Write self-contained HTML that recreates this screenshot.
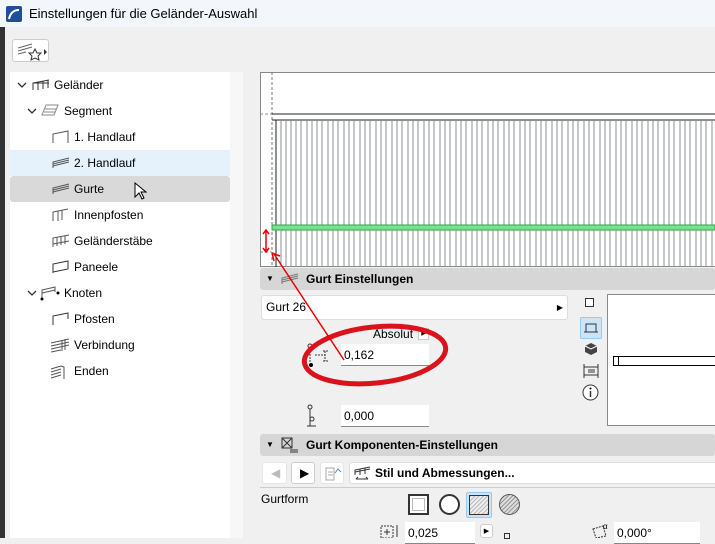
<!DOCTYPE html>
<html><head><meta charset="utf-8"><style>
*{margin:0;padding:0;box-sizing:border-box}
body{width:715px;height:538px;overflow:hidden;background:#f0f0f0;font-family:"Liberation Sans",sans-serif;font-size:12px;color:#000;position:relative}
.a{position:absolute}
.title{left:0;top:0;width:715px;height:27px;background:#f3f6fa}
.tree{left:10px;top:72px;width:220px;height:466px;background:#fff}
.row{position:absolute;left:0;width:220px;height:26px;line-height:26px}
.row span{position:absolute}
.chev{position:absolute;top:9px}
.hdr{position:absolute;left:260px;width:455px;height:22px;background:#d6d6d6;border-radius:3px;font-weight:bold;line-height:22px}
.inp{position:absolute;background:#fff;border-bottom:1px solid #888;height:22px;line-height:22px;padding-left:3px}
.btn{position:absolute;background:#fff;border:1px solid #ccc;border-radius:3px}
</style></head><body>
<div class="a title"></div>
<svg class="a" style="left:6px;top:6px" width="16" height="16"><rect width="16" height="16" rx="2" fill="#1f4e9c"/><path d="M3 13 Q5 4 13 4" stroke="#fff" stroke-width="2" fill="none"/></svg>
<div class="a" style="left:29px;top:6px;font-size:13px">Einstellungen für die Geländer-Auswahl</div>
<div class="a" style="left:0;top:27px;width:5px;height:511px;background:#333"></div>
<div class="btn" style="left:12px;top:39px;width:37px;height:23px"><svg width="37" height="23"><path d="M5 8l14-4M5 11l14-4M5 14l8-2" stroke="#666" fill="none"/><path d="M22 9l2 4 4 0-3 3 1 4-4-2-4 2 1-4-3-3 4 0z" stroke="#333" fill="#fff"/><path d="M31 9l3 3-3 3z" fill="#333"/></svg></div>
<div class="a tree">
<div class="row" style="top:0"><svg class="chev" style="left:7px" width="10" height="8"><path d="M1 2l4 4 4-4" stroke="#333" stroke-width="1.3" fill="none"/></svg><svg class="a" style="left:22px;top:7px" width="18" height="12"><path d="M1 11V4l16-3M1 4h16M6 11V3M11 10V2M16 9V1" stroke="#333" fill="none"/></svg><span style="left:44px">Geländer</span></div>
<div class="row" style="top:26px"><svg class="chev" style="left:17px" width="10" height="8"><path d="M1 2l4 4 4-4" stroke="#333" stroke-width="1.3" fill="none"/></svg><svg class="a" style="left:31px;top:6px" width="18" height="12"><path d="M1 11h12l4-10H5zM3 8h11M4 5h11" stroke="#888" fill="none"/></svg><span style="left:54px">Segment</span></div>
<div class="row" style="top:52px"><svg class="a" style="left:42px;top:6px" width="18" height="14"><path d="M1 13V4l15-3v12" stroke="#555" fill="none"/></svg><span style="left:64px">1. Handlauf</span></div>
<div class="row" style="top:78px;background:#e5f1fb"><svg class="a" style="left:42px;top:7px" width="18" height="12"><path d="M1 11V5l16-4M1 7l16-4M1 9l16-4" stroke="#555" fill="none"/></svg><span style="left:64px">2. Handlauf</span></div>
<div class="row" style="top:104px;background:#d9d9d9;border-radius:3px"><svg class="a" style="left:42px;top:7px" width="18" height="12"><path d="M1 11V5l16-4M1 7l16-4M1 9l16-4" stroke="#555" fill="none"/></svg><span style="left:64px">Gurte</span><svg class="a" style="left:124px;top:6px" width="14" height="18"><path d="M1 1v14l4-4 3 6 2-1-3-6h5z" fill="#fff" stroke="#000"/></svg></div>
<div class="row" style="top:130px"><svg class="a" style="left:42px;top:6px" width="18" height="14"><path d="M1 13V4l15-3M6 13V3M10 12V2" stroke="#555" fill="none"/></svg><span style="left:64px">Innenpfosten</span></div>
<div class="row" style="top:156px"><svg class="a" style="left:42px;top:6px" width="18" height="14"><path d="M1 13V4l16-3M1 10l16-3M5 12V3M9 11V2M13 10V2" stroke="#555" fill="none"/></svg><span style="left:64px">Geländerstäbe</span></div>
<div class="row" style="top:182px"><svg class="a" style="left:42px;top:6px" width="18" height="14"><path d="M1 13V4l15-3v8L1 12" stroke="#333" fill="none"/></svg><span style="left:64px">Paneele</span></div>
<div class="row" style="top:208px"><svg class="chev" style="left:17px" width="10" height="8"><path d="M1 2l4 4 4-4" stroke="#333" stroke-width="1.3" fill="none"/></svg><svg class="a" style="left:30px;top:5px" width="20" height="16"><path d="M2 14V5l13-3v5M2 8l13-3" stroke="#555" fill="none"/><circle cx="2" cy="14" r="1.5"/><circle cx="18" cy="8" r="1.5"/></svg><span style="left:54px">Knoten</span></div>
<div class="row" style="top:234px"><svg class="a" style="left:42px;top:6px" width="18" height="14"><path d="M1 13V4l15-3v6" stroke="#333" fill="none"/></svg><span style="left:64px">Pfosten</span></div>
<div class="row" style="top:260px"><svg class="a" style="left:40px;top:5px" width="20" height="16"><path d="M1 6l18-4M1 9l18-4M1 12l18-4M1 15l10-2M12 14V3M15 13V2" stroke="#555" fill="none"/></svg><span style="left:64px">Verbindung</span></div>
<div class="row" style="top:286px"><svg class="a" style="left:40px;top:5px" width="20" height="16"><path d="M1 6l10-3M1 9l10-3M1 12l10-3M1 15l10-3M11 3l3 1v12" stroke="#555" fill="none"/></svg><span style="left:64px">Enden</span></div>
</div>
<div class="a" style="left:230px;top:72px;width:13px;height:466px;background:#f7f7f7"></div>
<svg class="a" style="left:260px;top:72px" width="455" height="195">
<rect x="0.5" y="0.5" width="460" height="194" fill="#fff" stroke="#888"/>
<line x1="12" y1="0" x2="12" y2="195" stroke="#777" stroke-dasharray="3,2"/>
<line x1="0" y1="42" x2="12" y2="42" stroke="#888" stroke-dasharray="3,2"/>
<line x1="12" y1="42" x2="455" y2="42" stroke="#222"/>
<line x1="12" y1="48" x2="455" y2="48" stroke="#222"/>
<g stroke="#8a9096">
<path d="M21 48V195M26 48V195M31 48V195M36 48V195M41 48V195M47 48V195M52 48V195M57 48V195M62 48V195M68 48V195M73 48V195M78 48V195M84 48V195M89 48V195M94 48V195M100 48V195M105 48V195M110 48V195M116 48V195M121 48V195M126 48V195M132 48V195M137 48V195M142 48V195M148 48V195M153 48V195M158 48V195M164 48V195M169 48V195M174 48V195M180 48V195M185 48V195M190 48V195M196 48V195M201 48V195M206 48V195M212 48V195M217 48V195M222 48V195M228 48V195M233 48V195M238 48V195M244 48V195M249 48V195M254 48V195M260 48V195M265 48V195M270 48V195M276 48V195M281 48V195M286 48V195M292 48V195M297 48V195M302 48V195M308 48V195M313 48V195M318 48V195M324 48V195M329 48V195M334 48V195M340 48V195M345 48V195M350 48V195M356 48V195M361 48V195M366 48V195M372 48V195M377 48V195M382 48V195M388 48V195M393 48V195M398 48V195M404 48V195M409 48V195M414 48V195M420 48V195M425 48V195M430 48V195M436 48V195M441 48V195M446 48V195M452 48V195"/>
</g>
<path d="M16 48V195" stroke="#222"/>
<rect x="12" y="153" width="443" height="5" fill="#7ddf8f" stroke="#2aa84a"/>
<line x1="0" y1="180" x2="12" y2="180" stroke="#888" stroke-dasharray="3,2"/>
<path d="M6 158V180M3 162l3-4 3 4M3 176l3 4 3-4" stroke="#e00" stroke-width="1.5" fill="none"/>
</svg>
<div class="hdr" style="top:268px"><span style="position:absolute;left:6px;font-size:8px">▼</span><svg class="a" style="left:21px;top:5px" width="18" height="12"><path d="M1 11V5l16-4M1 7l16-4M1 9l16-4" stroke="#777" fill="none"/></svg><span style="position:absolute;left:46px">Gurt Einstellungen</span></div>
<div class="btn" style="left:261px;top:295px;width:307px;height:25px;line-height:23px;padding-left:4px;border-color:#ddd">Gurt 26<span style="position:absolute;right:4px;font-size:8px">▶</span></div>
<div class="a" style="left:373px;top:327px">Absolut</div>
<div class="a" style="left:418px;top:328px;width:11px;height:12px;border:1px solid #ccc;background:#fff;font-size:6px;text-align:center;line-height:11px">▶</div>
<svg class="a" style="left:306px;top:343px" width="30" height="26"><circle cx="4" cy="3" r="2" fill="none" stroke="#333"/><path d="M4 5v15M9 12h10M19 8v10M17 8h5M17 18h5" stroke="#333" fill="none" stroke-dasharray="2,1"/><circle cx="5" cy="22" r="2"/></svg>
<div class="inp" style="left:341px;top:344px;width:88px">0,162</div>
<svg class="a" style="left:306px;top:404px" width="20" height="24"><circle cx="4" cy="3" r="2" fill="none" stroke="#333"/><path d="M4 5v17M1 22h9" stroke="#333"/><circle cx="6" cy="15" r="2" fill="none" stroke="#333"/></svg>
<div class="inp" style="left:341px;top:405px;width:88px">0,000</div>
<div class="a" style="left:585px;top:298px;width:9px;height:9px;border:1px solid #333;background:#fff"></div>
<div class="a" style="left:580px;top:317px;width:22px;height:22px;background:#cce4f7;border:1px solid #99c9ef;border-radius:2px"></div>
<svg class="a" style="left:583px;top:320px" width="16" height="16"><path d="M3 12V4h10v8M1 12h14" stroke="#333" fill="none"/></svg>
<svg class="a" style="left:584px;top:342px" width="14" height="14"><path d="M7 1l6 3v6l-6 3-6-3V4z" fill="#444"/><path d="M1 4l6 3 6-3" stroke="#fff" fill="none"/></svg>
<svg class="a" style="left:582px;top:363px" width="18" height="16"><path d="M2 1v14M16 1v14M2 4h14M2 12h14M6 7h7M6 9h7" stroke="#333" fill="none"/></svg>
<svg class="a" style="left:582px;top:384px" width="17" height="17"><circle cx="8.5" cy="8.5" r="7.5" fill="#fff" stroke="#333"/><path d="M8.5 7v6" stroke="#333" stroke-width="1.5"/><circle cx="8.5" cy="4.5" r="1"/></svg>
<div class="a" style="left:607px;top:294px;width:110px;height:132px;background:#fff;border:1px solid #888"></div>
<div class="a" style="left:613px;top:356px;width:105px;height:10px;border:1px solid #000"></div>
<div class="a" style="left:613px;top:356px;width:6px;height:10px;border:1px solid #000"></div>
<svg class="a" style="left:260px;top:240px" width="200" height="160">
<ellipse cx="115" cy="115" rx="71" ry="28" transform="rotate(-6 115 115)" fill="none" stroke="#d9121b" stroke-width="5" stroke-dasharray="420,14"/>
<path d="M84 120L14 14M12 13l2 8M12 13l8 3" stroke="#e00" stroke-width="1.5" fill="none"/>
</svg>
<div class="hdr" style="top:434px"><span style="position:absolute;left:6px;font-size:8px">▼</span><svg class="a" style="left:21px;top:3px" width="18" height="16"><rect x="1" y="1" width="10" height="10" fill="none" stroke="#333"/><path d="M1 1l10 10M11 1L1 11M9 13h8M9 15h8" stroke="#333"/></svg><span style="position:absolute;left:46px">Gurt Komponenten-Einstellungen</span></div>
<div class="btn" style="left:262px;top:462px;width:25px;height:22px;border-color:#e5e5e5"><span style="position:absolute;left:8px;top:3px;color:#bbb">◀</span></div>
<div class="btn" style="left:291px;top:462px;width:24px;height:22px"><span style="position:absolute;left:8px;top:3px">▶</span></div>
<div class="btn" style="left:320px;top:462px;width:24px;height:22px;border-color:#e5e5e5"><svg width="24" height="22"><path d="M5 5h8v12H5zM7 9h5M7 12h5" stroke="#aaa" fill="none"/><path d="M14 10l3-4 3 3" stroke="#4a90d9" fill="none"/></svg></div>
<div class="btn" style="left:349px;top:462px;width:370px;height:22px;border-color:#ddd;font-weight:bold;line-height:20px;padding-left:25px">Stil und Abmessungen...<svg class="a" style="left:4px;top:3px" width="18" height="16"><path d="M1 9V4l15-3M1 6l15-3M6 9V3M11 8V2M2 13h12M2 13l2-2M14 13l-2-2" stroke="#333" fill="none"/></svg></div>
<div class="a" style="left:260px;top:487px;width:455px;height:1px;background:#ccc"></div>
<div class="a" style="left:261px;top:492px">Gurtform</div>
<div class="a" style="left:408px;top:494px;width:21px;height:21px;border:2px solid #333;background:#fff;outline:1px solid #bbb;outline-offset:-5px"></div>
<div class="a" style="left:439px;top:494px;width:21px;height:21px;border:2px solid #333;border-radius:50%;background:#fff"></div>
<div class="a" style="left:466px;top:492px;width:26px;height:26px;background:#cce4f7;border:1px solid #99c9ef;border-radius:2px"></div>
<div class="a" style="left:469px;top:495px;width:20px;height:20px;border:1px solid #333;background:repeating-linear-gradient(135deg,#bbb 0 1px,#eee 1px 3px)"></div>
<div class="a" style="left:499px;top:494px;width:21px;height:21px;border:1px solid #555;border-radius:50%;background:repeating-linear-gradient(135deg,#999 0 1px,#ddd 1px 3px)"></div>
<svg class="a" style="left:379px;top:523px" width="22" height="15"><rect x="2" y="3" width="12" height="12" fill="none" stroke="#333" stroke-dasharray="2,1"/><path d="M8 6v6M5 9h6M18 2v12" stroke="#333"/></svg>
<div class="inp" style="left:405px;top:522px;width:70px">0,025</div>
<div class="btn" style="left:480px;top:524px;width:13px;height:14px;font-size:7px;text-align:center;line-height:13px">▶</div>
<div class="a" style="left:504px;top:533px;width:6px;height:6px;border:1px solid #333"></div>
<svg class="a" style="left:590px;top:521px" width="22" height="17"><path d="M3 8l10-3 3 10-10 2z" fill="none" stroke="#333" stroke-dasharray="2,1"/><text x="13" y="8" font-size="8" font-family="Liberation Sans">α</text></svg>
<div class="inp" style="left:614px;top:522px;width:86px">0,000°</div>
</body></html>
